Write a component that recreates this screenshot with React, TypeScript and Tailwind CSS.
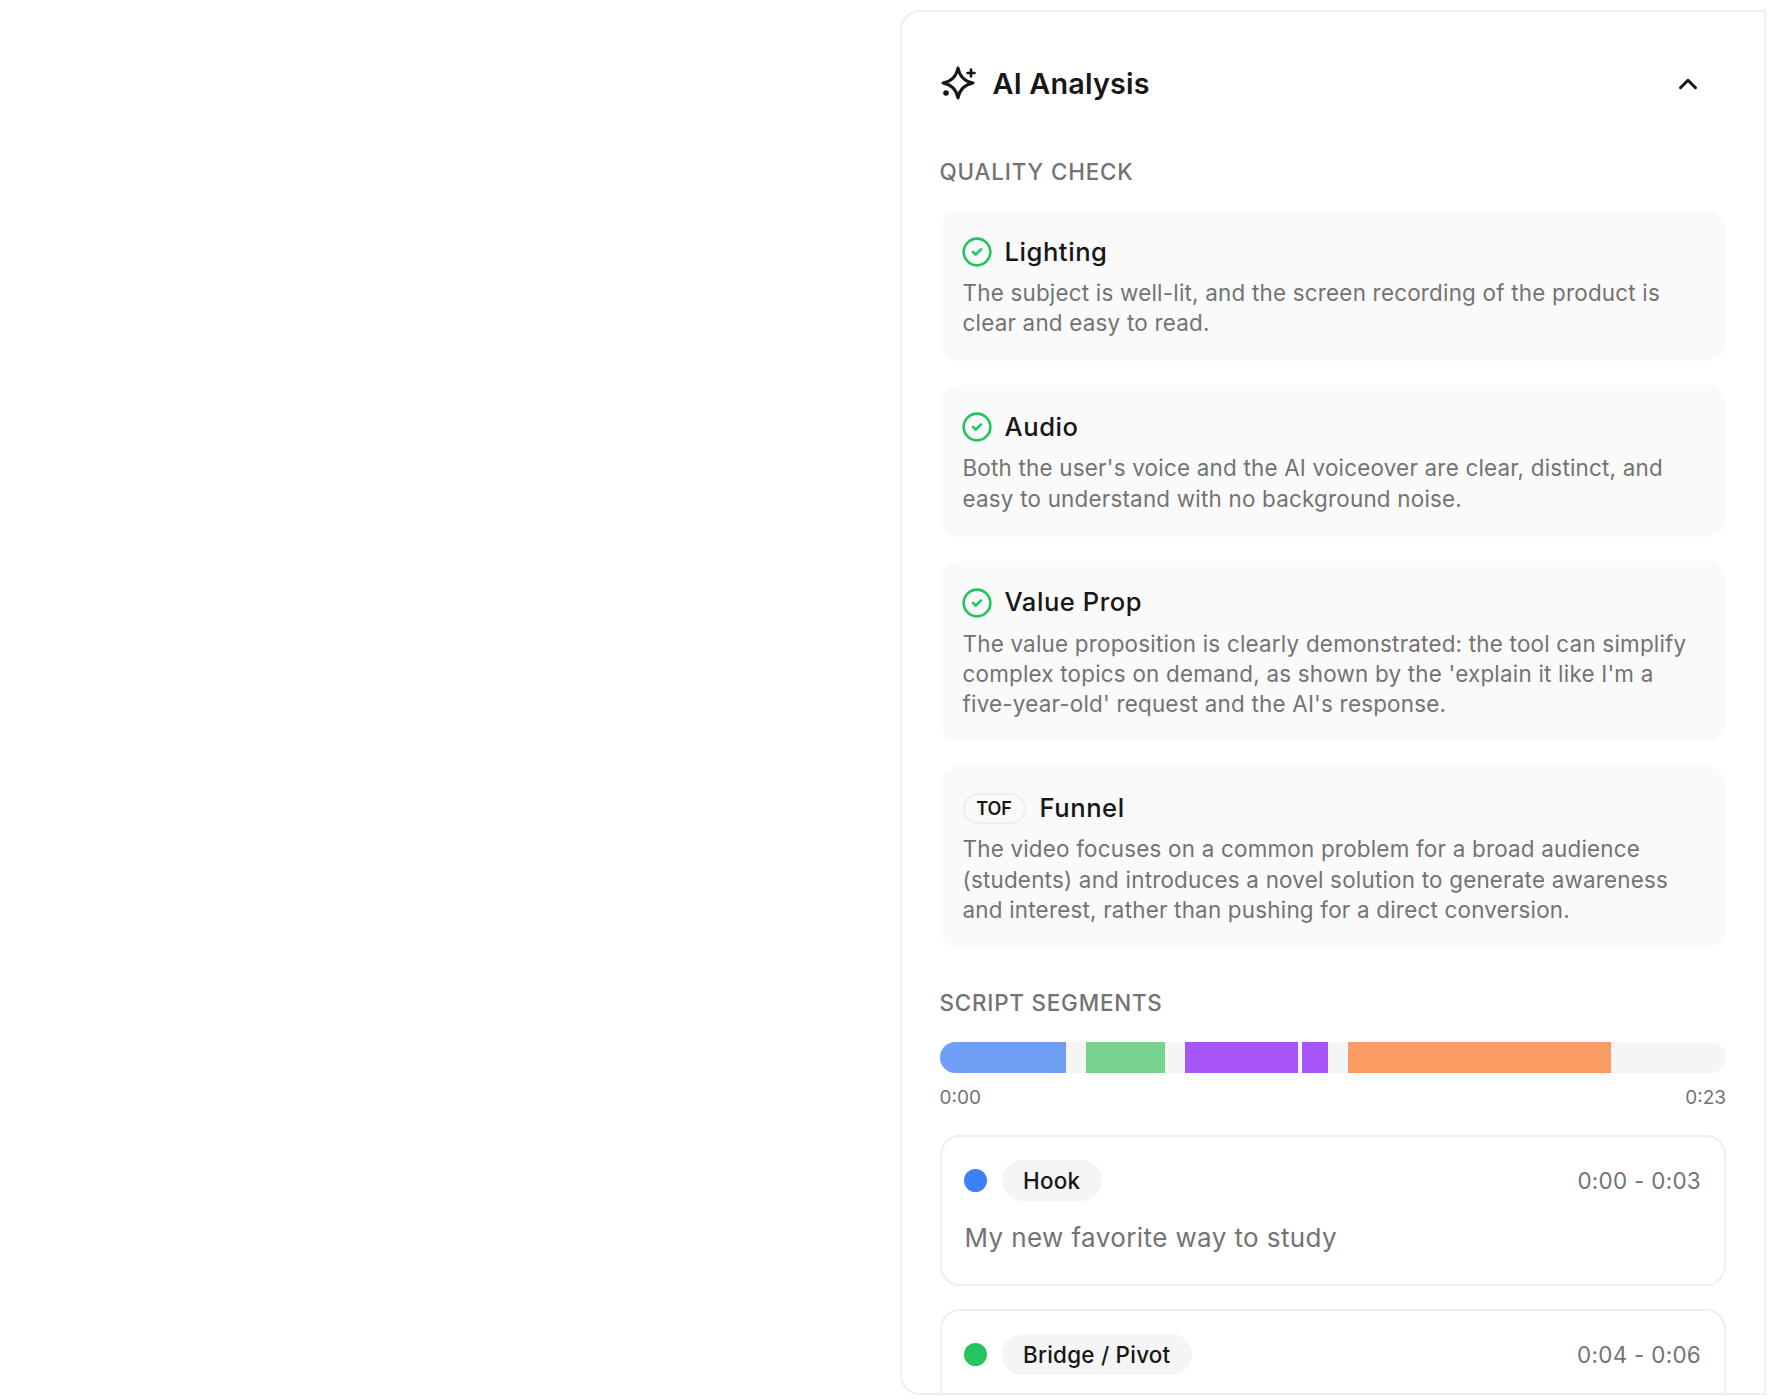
import { ChevronUp, CircleCheck } from "lucide-react";

type QualityItem = {
  title: string;
  text: string;
  badge?: string;
};

const qualityItems: QualityItem[] = [
  {
    title: "Lighting",
    text: "The subject is well-lit, and the screen recording of the product is clear and easy to read.",
  },
  {
    title: "Audio",
    text: "Both the user's voice and the AI voiceover are clear, distinct, and easy to understand with no background noise.",
  },
  {
    title: "Value Prop",
    text: "The value proposition is clearly demonstrated: the tool can simplify complex topics on demand, as shown by the 'explain it like I'm a five-year-old' request and the AI's response.",
  },
  {
    title: "Funnel",
    badge: "TOF",
    text: "The video focuses on a common problem for a broad audience (students) and introduces a novel solution to generate awareness and interest, rather than pushing for a direct conversion.",
  },
];

function SparkIcon() {
  return (
    <svg width="36" height="36" viewBox="0 0 36 36" className="-mt-[3px] shrink-0 text-[#171717]">
      <path
        d="M18 3C19.5 11 25 16.5 33 18C25 19.5 19.5 25 18 33C16.5 25 11 19.5 3 18C11 16.5 16.5 11 18 3Z"
        fill="none"
        stroke="currentColor"
        strokeWidth="3"
        strokeLinejoin="round"
      />
      <path d="M31 4.5V11.5M27.5 8H34.5" fill="none" stroke="currentColor" strokeWidth="2.6" strokeLinecap="round" />
      <circle cx="6" cy="28" r="2.8" fill="currentColor" />
    </svg>
  );
}

function QualityCard({ item }: { item: QualityItem }) {
  return (
    <div className="rounded-[20px] bg-[#fafafa] px-[23px] pb-[22.5px] pt-[26px]">
      <div className="flex h-[32px] items-center gap-[14px]">
        {item.badge ? (
          <span className="flex h-[31px] w-[63px] items-center justify-center rounded-full border-2 border-[#eeeeee] text-[18px] font-semibold text-[#171717]">
            {item.badge}
          </span>
        ) : (
          <CircleCheck size={32} strokeWidth={2} className="-mx-[2px] text-[#22c55e]" />
        )}
        <h3 className="text-[25.6px] font-medium tracking-[0.55px] text-[#171717]">{item.title}</h3>
      </div>
      <p className="mt-[10px] text-[22.4px] leading-[30.4px] tracking-[0.22px] text-[#737373]">{item.text}</p>
    </div>
  );
}

function SegmentCard({
  dot,
  label,
  time,
  text,
}: {
  dot: string;
  label: string;
  time: string;
  text?: string;
}) {
  return (
    <div className="min-h-[150px] shrink-0 rounded-[20px] border-2 border-[#eeeeee] pb-[26px] pl-[22px] pr-[23px] pt-[23px]">
      <div className="flex items-center">
        <span className={`h-[23px] w-[23px] rounded-full ${dot}`} />
        <span className="ml-[15px] flex h-[41px] items-center rounded-full bg-[#f5f5f5] pl-[21.5px] pr-[21.5px] text-[22.4px] font-medium tracking-[0.25px] text-[#171717]">
          {label}
        </span>
        <span className="ml-auto text-[22.4px] tracking-[0.3px] text-[#737373]">{time}</span>
      </div>
      {text ? (
        <p className="ml-[1px] mt-[17px] text-[26px] leading-[40px] tracking-[0.4px] text-[#737373]">{text}</p>
      ) : null}
    </div>
  );
}

export default function App() {
  return (
    <main className="min-h-[1400px] bg-white pt-[10px] font-['Inter',sans-serif]">
      <div className="ml-[900px] h-[1385px] w-[866px] overflow-hidden rounded-l-[20px] border-2 border-[#eeeeee] bg-white pl-[37.5px] pr-[38px] pt-[36px]">
        <header className="flex h-[72px] items-center justify-between">
          <div className="flex items-center gap-[16px]">
            <SparkIcon />
            <h2 className="ml-[1px] text-[28.8px] font-semibold tracking-[0.2px] text-[#171717]">AI Analysis</h2>
          </div>
          <ChevronUp size={30} strokeWidth={2.4} className="mr-[23px] text-[#171717]" />
        </header>

        <h3 className="mt-[36px] text-[22.4px] font-medium uppercase leading-[32px] tracking-[0.86px] text-[#737373]">
          Quality Check
        </h3>
        <div className="mt-[22px] flex flex-col gap-[24px]">
          {qualityItems.map((item) => (
            <QualityCard key={item.title} item={item} />
          ))}
        </div>

        <h3 className="mt-[39px] text-[22.4px] font-medium uppercase leading-[32px] tracking-[0.8px] text-[#737373]">
          Script Segments
        </h3>
        <div className="mt-[23px] flex h-[31px] overflow-hidden rounded-full bg-[#f5f5f5]">
          <div className="w-[126px] bg-[#6f9ff5]" />
          <div className="ml-[20px] w-[79px] bg-[#75d38d]" />
          <div className="ml-[20px] w-[113px] bg-[#a855f7]" />
          <div className="ml-[4px] w-[26px] bg-[#a855f7]" />
          <div className="ml-[20px] w-[263px] bg-[#fa9b63]" />
        </div>
        <div className="mt-[11px] flex justify-between text-[19px] leading-[28px] text-[#737373]">
          <span>0:00</span>
          <span>0:23</span>
        </div>

        <div className="mt-[23px] flex flex-col gap-[23px]">
          <SegmentCard
            dot="bg-[#3b82f6]"
            label="Hook"
            time="0:00 - 0:03"
            text="My new favorite way to study"
          />
          <SegmentCard dot="bg-[#22c55e]" label="Bridge / Pivot" time="0:04 - 0:06" />
        </div>
      </div>
    </main>
  );
}
